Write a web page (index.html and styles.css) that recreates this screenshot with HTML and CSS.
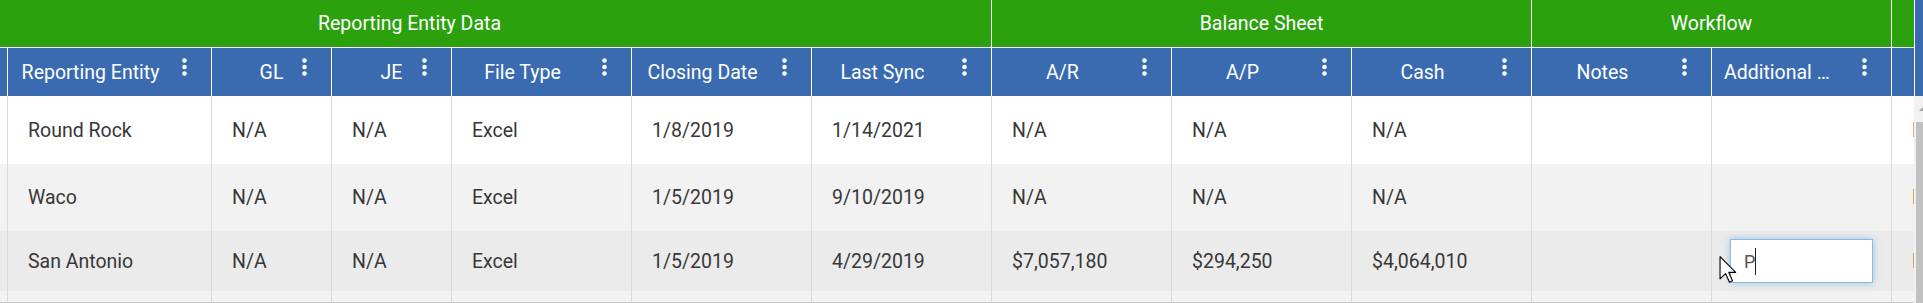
FILE: index.html
```html
<!DOCTYPE html>
<html lang="en">
  <head>
    <meta charset="UTF-8" />
    <meta name="viewport" content="width=device-width, initial-scale=1.0" />
    <title>Reporting Entities</title>
    <link rel="stylesheet" href="styles.css">
  </head>
  <body>
    <div class="grid">
      <!-- header: band row + column row, scrolled left like the live grid -->
      <div class="grid-head">
        <div class="head-view">
          <div class="head-inner">
            <div class="band-row">
              <div class="band band-entity">Reporting Entity Data</div>
              <div class="band band-balance">Balance Sheet</div>
              <div class="band band-workflow">Workflow</div>
              <div class="band band-review">Review</div>
            </div>
            <div class="col-row">
              <div class="hcell w-std"><span class="hlabel"></span></div>
              <div class="hcell w-entity">
                <span class="hlabel">Reporting Entity</span>
                <svg class="kebab" width="5" height="18" viewBox="0 0 5 18"><circle cx="2.5" cy="2.5" r="2.3"/><circle cx="2.5" cy="9" r="2.3"/><circle cx="2.5" cy="15.5" r="2.3"/></svg>
              </div>
              <div class="hcell w-narrow">
                <span class="hlabel">GL</span>
                <svg class="kebab" width="5" height="18" viewBox="0 0 5 18"><circle cx="2.5" cy="2.5" r="2.3"/><circle cx="2.5" cy="9" r="2.3"/><circle cx="2.5" cy="15.5" r="2.3"/></svg>
              </div>
              <div class="hcell w-narrow">
                <span class="hlabel">JE</span>
                <svg class="kebab" width="5" height="18" viewBox="0 0 5 18"><circle cx="2.5" cy="2.5" r="2.3"/><circle cx="2.5" cy="9" r="2.3"/><circle cx="2.5" cy="15.5" r="2.3"/></svg>
              </div>
              <div class="hcell w-std">
                <span class="hlabel">File Type</span>
                <svg class="kebab" width="5" height="18" viewBox="0 0 5 18"><circle cx="2.5" cy="2.5" r="2.3"/><circle cx="2.5" cy="9" r="2.3"/><circle cx="2.5" cy="15.5" r="2.3"/></svg>
              </div>
              <div class="hcell w-std">
                <span class="hlabel">Closing Date</span>
                <svg class="kebab" width="5" height="18" viewBox="0 0 5 18"><circle cx="2.5" cy="2.5" r="2.3"/><circle cx="2.5" cy="9" r="2.3"/><circle cx="2.5" cy="15.5" r="2.3"/></svg>
              </div>
              <div class="hcell w-std">
                <span class="hlabel">Last Sync</span>
                <svg class="kebab" width="5" height="18" viewBox="0 0 5 18"><circle cx="2.5" cy="2.5" r="2.3"/><circle cx="2.5" cy="9" r="2.3"/><circle cx="2.5" cy="15.5" r="2.3"/></svg>
              </div>
              <div class="hcell w-std">
                <span class="hlabel">A/R</span>
                <svg class="kebab" width="5" height="18" viewBox="0 0 5 18"><circle cx="2.5" cy="2.5" r="2.3"/><circle cx="2.5" cy="9" r="2.3"/><circle cx="2.5" cy="15.5" r="2.3"/></svg>
              </div>
              <div class="hcell w-std">
                <span class="hlabel">A/P</span>
                <svg class="kebab" width="5" height="18" viewBox="0 0 5 18"><circle cx="2.5" cy="2.5" r="2.3"/><circle cx="2.5" cy="9" r="2.3"/><circle cx="2.5" cy="15.5" r="2.3"/></svg>
              </div>
              <div class="hcell w-std">
                <span class="hlabel">Cash</span>
                <svg class="kebab" width="5" height="18" viewBox="0 0 5 18"><circle cx="2.5" cy="2.5" r="2.3"/><circle cx="2.5" cy="9" r="2.3"/><circle cx="2.5" cy="15.5" r="2.3"/></svg>
              </div>
              <div class="hcell w-std">
                <span class="hlabel">Notes</span>
                <svg class="kebab" width="5" height="18" viewBox="0 0 5 18"><circle cx="2.5" cy="2.5" r="2.3"/><circle cx="2.5" cy="9" r="2.3"/><circle cx="2.5" cy="15.5" r="2.3"/></svg>
              </div>
              <div class="hcell w-std">
                <span class="hlabel">Additional Notes</span>
                <svg class="kebab" width="5" height="18" viewBox="0 0 5 18"><circle cx="2.5" cy="2.5" r="2.3"/><circle cx="2.5" cy="9" r="2.3"/><circle cx="2.5" cy="15.5" r="2.3"/></svg>
              </div>
              <div class="hcell w-std">
                <span class="hlabel">Status</span>
                <svg class="kebab" width="5" height="18" viewBox="0 0 5 18"><circle cx="2.5" cy="2.5" r="2.3"/><circle cx="2.5" cy="9" r="2.3"/><circle cx="2.5" cy="15.5" r="2.3"/></svg>
              </div>
            </div>
          </div>
        </div>
        <div class="head-corner"></div>
      </div>

      <!-- body rows -->
      <div class="grid-body">
        <div class="body-view">
          <div class="body-inner">
            <div class="row row-first">
              <div class="cell w-std"></div>
              <div class="cell w-entity">Round Rock</div>
              <div class="cell w-narrow">N/A</div>
              <div class="cell w-narrow">N/A</div>
              <div class="cell w-std">Excel</div>
              <div class="cell w-std">1/8/2019</div>
              <div class="cell w-std">1/14/2021</div>
              <div class="cell w-std">N/A</div>
              <div class="cell w-std">N/A</div>
              <div class="cell w-std">N/A</div>
              <div class="cell w-std"></div>
              <div class="cell w-std"></div>
              <div class="cell w-std">N/A</div>
            </div>
            <div class="row">
              <div class="cell w-std"></div>
              <div class="cell w-entity">Waco</div>
              <div class="cell w-narrow">N/A</div>
              <div class="cell w-narrow">N/A</div>
              <div class="cell w-std">Excel</div>
              <div class="cell w-std">1/5/2019</div>
              <div class="cell w-std">9/10/2019</div>
              <div class="cell w-std">N/A</div>
              <div class="cell w-std">N/A</div>
              <div class="cell w-std">N/A</div>
              <div class="cell w-std"></div>
              <div class="cell w-std"></div>
              <div class="cell w-std">N/A</div>
            </div>
            <div class="row row-editing">
              <div class="cell w-std"></div>
              <div class="cell w-entity">San Antonio</div>
              <div class="cell w-narrow">N/A</div>
              <div class="cell w-narrow">N/A</div>
              <div class="cell w-std">Excel</div>
              <div class="cell w-std">1/5/2019</div>
              <div class="cell w-std">4/29/2019</div>
              <div class="cell w-std">$7,057,180</div>
              <div class="cell w-std">$294,250</div>
              <div class="cell w-std">$4,064,010</div>
              <div class="cell w-std"></div>
              <div class="cell w-std cell-edit">
                <div class="editor"><span>P</span><span class="caret"></span></div>
                <svg class="pointer" width="18" height="27" viewBox="-0.5 -0.5 12.5 19.5"><path d="M0 0 L0 16 L4 12.2 L6.8 18.4 L9 17.4 L6.3 11.3 L11.3 11.3 Z" fill="#fff" stroke="#000" stroke-width="0.8" stroke-linejoin="round"/></svg>
              </div>
              <div class="cell w-std">N/A</div>
            </div>
            <div class="row">
              <div class="cell w-std"></div>
              <div class="cell w-entity">Temple</div>
              <div class="cell w-narrow">N/A</div>
              <div class="cell w-narrow">N/A</div>
              <div class="cell w-std">Excel</div>
              <div class="cell w-std"></div>
              <div class="cell w-std"></div>
              <div class="cell w-std"></div>
              <div class="cell w-std"></div>
              <div class="cell w-std"></div>
              <div class="cell w-std"></div>
              <div class="cell w-std"></div>
              <div class="cell w-std"></div>
            </div>
          </div>
        </div>
        <div class="vscroll">
          <div class="vscroll-btn"><span class="vscroll-arrow"></span></div>
          <div class="vscroll-thumb"></div>
        </div>
      </div>
    </div>
  </body>
</html>
```

FILE: styles.css
```css
body {
  margin: 0;
  font-family: Roboto, "Noto Sans", sans-serif;
  background-color: #ffffff;
  overflow: hidden;
}

.grid {
  width: 1931px;
}

/* header */
.grid-head {
  display: flex;
  height: 96px;
}
.head-view {
  flex: 1;
  overflow: hidden;
}
.head-inner {
  margin-left: -172px; /* grid is scrolled a little to the right */
}
.band-row,
.col-row {
  display: flex;
}
.band {
  flex: none;
  height: 48px;
  box-sizing: border-box;
  display: flex;
  align-items: center;
  justify-content: center;
  background-color: #2ca10e;
  color: #ffffff;
  font-size: 19.5px;
  border-right: 1px solid #ffffff;
  border-bottom: 1px solid #ffffff;
}
.band-entity {
  width: 1164px;
}
.band-balance {
  width: 540px;
}
.band-workflow {
  width: 360px;
}
.band-review {
  width: 180px;
}
.head-corner {
  flex: none;
  width: 17px;
  box-sizing: border-box;
  background-color: #3a6bb1;
  border-left: 1px solid #ffffff;
}

.hcell {
  flex: none;
  position: relative;
  height: 48px;
  box-sizing: border-box;
  display: flex;
  align-items: center;
  padding: 1px 50px 0 12px;
  background-color: #3a6bb1;
  color: #ffffff;
  font-size: 19.5px;
  border-right: 1px solid #ffffff;
}
.hcell.w-narrow {
  padding: 1px 13px 0 13px;
}
.hlabel {
  flex: 1;
  min-width: 0;
  text-align: center;
  white-space: nowrap;
  overflow: hidden;
  text-overflow: ellipsis;
}
.kebab {
  position: absolute;
  right: 24px;
  top: 10px;
  fill: #ffffff;
}

/* column widths */
.w-std {
  width: 180px;
}
.w-entity {
  width: 204px;
}
.w-narrow {
  width: 120px;
}

/* body */
.grid-body {
  display: flex;
  height: 207px;
}
.body-view {
  flex: 1;
  overflow: hidden;
  box-sizing: border-box;
  border-bottom: 1px solid #c6c6c6;
}
.body-inner {
  margin-left: -172px;
}
.row {
  display: flex;
  height: 67px;
  background-color: #ffffff;
}
.row:nth-child(even) {
  background-color: #f2f2f2;
}
.row-first {
  height: 68px;
}
.row-editing {
  height: 60px;
  background-color: #ebebeb;
}
.cell {
  flex: none;
  box-sizing: border-box;
  display: flex;
  align-items: center;
  padding: 0 20px;
  font-size: 19.5px;
  color: #383838;
  white-space: nowrap;
  overflow: hidden;
  border-right: 1px solid #dadada;
}
.cell-edit {
  position: relative;
  padding: 0 18px;
  overflow: visible;
}
.editor {
  width: 100%;
  height: 44px;
  box-sizing: border-box;
  display: flex;
  align-items: center;
  padding-left: 13px;
  background-color: #ffffff;
  border: 1px solid #84bde9;
  box-shadow: 0 0 7px rgba(90, 160, 225, 0.55);
  font-size: 18px;
  color: #555555;
}
.caret {
  width: 1px;
  height: 27px;
  background-color: #222222;
}
.pointer {
  position: absolute;
  left: 7px;
  top: 25px;
}

/* vertical scrollbar */
.vscroll {
  flex: none;
  width: 17px;
  display: flex;
  flex-direction: column;
  background-color: #f1f1f1;
}
.vscroll-btn {
  height: 26px;
  display: flex;
  justify-content: center;
  align-items: center;
}
.vscroll-arrow {
  width: 0;
  height: 0;
  border-left: 4px solid transparent;
  border-right: 4px solid transparent;
  border-bottom: 4px solid #a3a3a3;
}
.vscroll-thumb {
  flex: 1;
  margin: 0 2px;
  background-color: #c1c1c1;
}
```
